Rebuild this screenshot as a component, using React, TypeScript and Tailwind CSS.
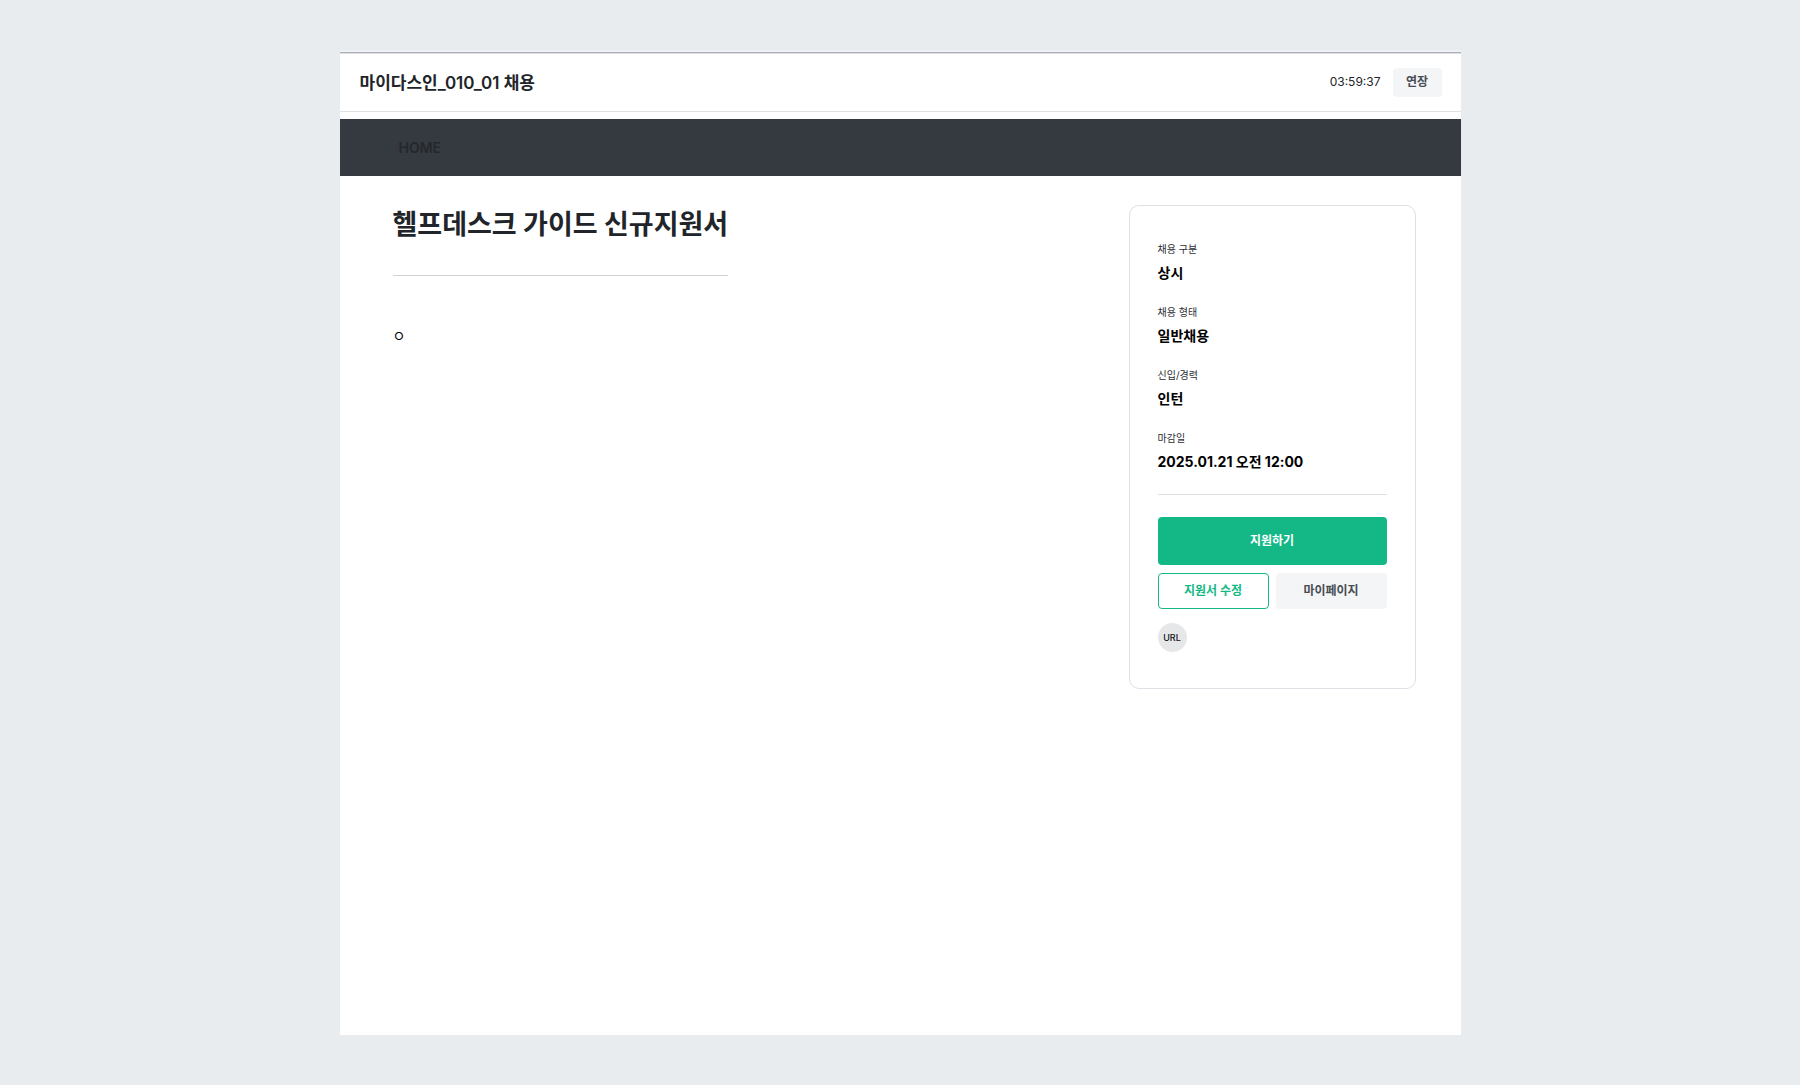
const details = [
  { label: '채용 구분', value: '상시' },
  { label: '채용 형태', value: '일반채용' },
  { label: '신입/경력', value: '인턴' },
  { label: '마감일', value: '2025.01.21 오전 12:00' },
];

function Header() {
  return (
    <header>
      <div className="h-[2px] bg-[#eef1f8]" />
      <div className="h-px bg-[#aeb1b3]" />
      <div className="h-px bg-[#dcdee0]" />
      <div className="flex h-[58px] items-center justify-between border-b border-[#dfe1e3] pr-[19px] pl-5">
        <p className="text-[17px] leading-6 font-semibold">마이다스인_010_01 채용</p>
        <div className="flex items-center gap-3">
          <time className="pb-px text-[12px] leading-5">03:59:37</time>
          <button
            type="button"
            className="h-[29px] w-[49px] rounded-[4px] bg-[#f4f5f7] pb-px text-[12px] font-semibold text-[#484c54]"
          >
            연장
          </button>
        </div>
      </div>
    </header>
  );
}

function JobCard() {
  return (
    <aside className="w-[287px] shrink-0 rounded-[10px] border border-[#dfe0e6] px-7 pt-[34px] pb-9">
      <dl className="flex flex-col gap-[19px] border-b border-[#dfe0e6] pb-[21px]">
        {details.map((item) => (
          <div key={item.label}>
            <dt className="text-[10px] leading-[18px] text-[#2c2f35]">{item.label}</dt>
            <dd className="pt-1 text-[14px] leading-[22px] font-bold text-black">{item.value}</dd>
          </div>
        ))}
      </dl>
      <button
        type="button"
        className="mt-[22px] h-12 w-full rounded-[4px] bg-[#14b886] text-[12px] font-bold text-white"
      >
        지원하기
      </button>
      <div className="mt-2 grid grid-cols-2 gap-[7px]">
        <button
          type="button"
          className="h-9 rounded-[4px] border border-[#14b886] text-[12px] font-semibold text-[#14b886]"
        >
          지원서 수정
        </button>
        <button
          type="button"
          className="h-9 rounded-[4px] bg-[#f4f5f7] text-[12px] font-semibold text-[#484c54]"
        >
          마이페이지
        </button>
      </div>
      <button
        type="button"
        className="mt-[14px] flex size-[29px] items-center justify-center rounded-full bg-[#e6e7e9] text-[9px] font-medium text-[#111111]"
      >
        URL
      </button>
    </aside>
  );
}

export default function App() {
  return (
    <div className="flex min-h-screen flex-col bg-[#e8ecef] py-[50px] font-['Inter','Noto_Sans_CJK_KR',sans-serif] text-[#212529]">
      <div className="mx-auto flex w-full max-w-[1121px] grow flex-col bg-white">
        <Header />
        <nav className="mt-[7px] flex h-[57px] items-center bg-[#353940] px-[59px]">
          <a href="#home" className="text-[14px] leading-5 font-semibold text-[#24282c]">
            HOME
          </a>
        </nav>
        <main className="flex items-start justify-between pt-[29px] pr-[45px] pl-[53px]">
          <article>
            <h1 className="border-b border-[#cfd2d7] pb-[30px] text-[27px] leading-10 font-bold">
              헬프데스크 가이드 신규지원서
            </h1>
            <p className="mt-[50px] text-[14px] leading-5 text-black">ㅇ</p>
          </article>
          <JobCard />
        </main>
      </div>
    </div>
  );
}
